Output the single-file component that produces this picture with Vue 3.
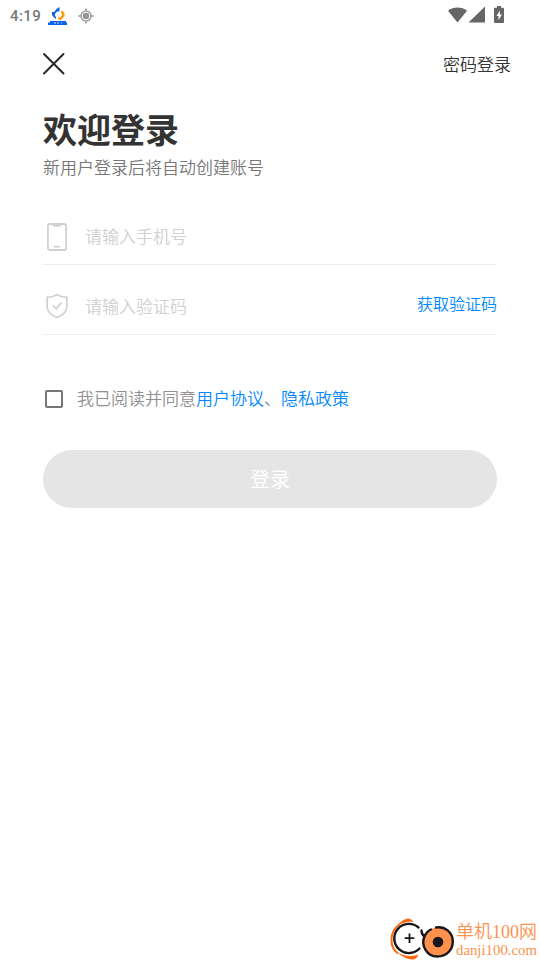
<script setup>
import { ref } from 'vue'

const phone = ref('')
const code = ref('')
const agreed = ref(false)
</script>

<template>
  <div class="screen">
    <header class="status">
      <span class="time">4:19</span>
      <svg class="app-icon" width="20" height="19" viewBox="0 0 20 19">
        <path d="M4 8V5H6L9 1.500 11.500 0V4.500H9L7 7V9.500H8V12L6 10.500Z" fill="#0d62ea" />
        <path d="M13 4H14.500L16.500 6V9L12.500 13.500 10 12V10.500H12L14 8V6.500H13Z" fill="#ff970f" />
        <path d="M2 14h16v1.500h1V18H0v-2.500h2Z" fill="#0d62ea" />
        <path d="M6 16h2M9 16h2M13 16h1" stroke="#cfe0ff" />
      </svg>
      <svg class="locate" width="16" height="16" viewBox="0 0 16 16" fill="none" stroke="#a8a8a8">
        <circle cx="8" cy="8" r="5" stroke-width="1.700" />
        <circle cx="8" cy="8" r="3.200" fill="#969696" stroke="none" />
        <path d="M8 .5v3M8 12.500v3M.5 8h3M12.500 8h3" stroke-width="1.800" />
      </svg>
      <span class="spacer"></span>
      <svg width="58" height="19" viewBox="0 0 58 19" fill="#666">
        <path d="M0 4.700C5.500.4 13.500.4 19 4.700L9.500 16.500Z" />
        <path d="M37 .5v16H20.500Z" />
        <path d="M49 0h4v1.700h2q1 0 1 1V16q0 1-1 1h-8q-1 0-1-1V2.700q0-1 1-1h2Z" />
        <path d="M51.800 4.500 48.500 10h2v4.300l3.400-5.800h-2.100Z" fill="#fff" />
      </svg>
    </header>

    <nav class="nav">
      <button class="close" aria-label="关闭">
        <svg width="24" height="24" viewBox="0 0 24 24">
          <path d="M2 2 21.500 21.500M21.500 2 2 21.500" stroke="#282828" stroke-width="2" stroke-linecap="round" />
        </svg>
      </button>
      <a class="password-login">密码登录</a>
    </nav>

    <main class="content">
      <h1>欢迎登录</h1>
      <p class="subtitle">新用户登录后将自动创建账号</p>

      <form @submit.prevent>
        <label class="field phone">
          <svg class="field-icon" width="22" height="28" viewBox="0 0 22 28" fill="none" stroke="#d0d0d0">
            <rect x="1.900" y="1" width="18.200" height="26" rx="1.800" stroke-width="1.800" />
            <path d="M6 1h10l-1 2q-.4.700-1.300.7H8.300Q7.400 3.700 7 3Z" fill="#d0d0d0" stroke="none" />
            <path d="M8 23.800h5.500" stroke-width="1.400" stroke-linecap="round" />
          </svg>
          <input v-model="phone" type="tel" placeholder="请输入手机号" />
        </label>
        <label class="field">
          <svg class="field-icon" width="22" height="26" viewBox="0 0 22 26" fill="none" stroke="#d0d0d0" stroke-width="1.700" stroke-linejoin="round">
            <path d="M11 1.500Q7 4.500 1.200 4.200V13.500C1.200 19 5.500 22.500 11 24.500 16.500 22.500 20.800 19 20.800 13.500V4.200Q15 4.500 11 1.500Z" />
            <path d="m7.200 12.500 3.200 3.300 4.700-6" stroke-linecap="round" />
          </svg>
          <input v-model="code" type="text" placeholder="请输入验证码" />
          <a class="get-code">获取验证码</a>
        </label>

        <label class="agreement">
          <input v-model="agreed" type="checkbox" />
          <span>我已阅读并同意<a>用户协议</a>、<a>隐私政策</a></span>
        </label>

        <button class="submit">登录</button>
      </form>
    </main>

    <footer class="brand">
      <svg width="64" height="42" viewBox="0 0 64 42" fill="none">
        <path d="M8 7.500Q12 1 18 .5 22.500 1 23 4Q16 2.800 8 7.500Z" fill="#ff6b0a" />
        <path d="M10 6C-1 13-1 29 8 35.500" stroke="#ff6b0a" stroke-width="2" />
        <path d="M7 34Q17 40.500 28 36.500 27.500 41.500 22 41.500 13 40.500 7 34Z" fill="#ff6b0a" />
        <path d="M28.500 9.500A14.600 14.600 0 1 0 29.500 30.500" stroke="#19171b" stroke-width="2.400" stroke-linecap="round" />
        <path d="M19.500 15.500v9.500M14.700 20.200h9.600" stroke="#19171b" stroke-width="1.800" />
        <circle cx="48" cy="24" r="14.500" fill="#ff914d" />
        <path d="M31.500 12.500q0 4 3 6c-4 9 2.500 20 12.500 20 10 0 15.800-7 15.800-15C62.800 14 54.500 8 46 9.500M41 11.500q-4.500 2-6.500 7" stroke="#19171b" stroke-width="2.400" stroke-linecap="round" />
        <circle cx="48" cy="24" r="5.300" fill="#19171b" />
      </svg>
      <div class="brand-text">
        <span class="brand-name">单机100网</span>
        <span class="brand-url">danji100.com</span>
      </div>
    </footer>
  </div>
</template>

<style>
body {
  margin: 0;
  background: #fff;
}
</style>

<style scoped>
.screen {
  box-sizing: border-box;
  display: flex;
  flex-direction: column;
  height: 960px;
  overflow: hidden;
  background: #fff;
  font-family: "Noto Sans CJK SC", sans-serif;
  font-weight: 350;
  color: #333;
}
svg {
  display: block;
  flex: none;
}
button {
  border: 0;
  font: inherit;
}
.status {
  display: flex;
  align-items: center;
  height: 32px;
  padding: 0 34px 2px 10px;
  box-sizing: border-box;
}
.time {
  width: 38px;
  margin-top: 2px;
  font: 500 15px/20px Roboto, sans-serif;
  letter-spacing: .4px;
  color: #777;
}
.app-icon {
  margin-top: 3px;
}
.locate {
  margin: 1px 0 0 10px;
}
.spacer {
  flex: 1;
}
.nav {
  display: flex;
  align-items: center;
  justify-content: space-between;
  height: 64px;
  padding: 0 29px 0 42px;
}
.close {
  padding: 0;
  background: none;
}
.password-login {
  padding-bottom: 2px;
  font-size: 17px;
  line-height: 25px;
}
.content {
  flex: 1;
  padding: 8px 43px 0;
}
h1 {
  margin: 0;
  font-size: 34px;
  font-weight: 700;
  line-height: 50px;
}
.subtitle {
  margin: 0 0 36px;
  font-size: 17px;
  line-height: 25px;
  color: #777;
}
.field {
  display: flex;
  align-items: center;
  box-sizing: border-box;
  height: 70px;
  border-bottom: 1px solid #ebebeb;
  padding-top: 12px;
}
.phone {
  height: 50px;
  padding: 0 0 5px;
}
.field-icon {
  margin: 0 17px 0 3px;
}
.field input {
  flex: 1;
  min-width: 0;
  padding: 0;
  border: 0;
  outline: 0;
  background: none;
  font: 350 17px/25px "Noto Sans CJK SC", sans-serif;
}
.phone input {
  margin-bottom: 3px;
}
.field input::placeholder {
  color: #d0d0d0;
  opacity: 1;
}
.get-code {
  margin-bottom: 5px;
  font-size: 16px;
  line-height: 24px;
  color: #0088ff;
}
.agreement {
  display: flex;
  align-items: center;
  height: 26px;
  margin-top: 50px;
  font-size: 17px;
  line-height: 25px;
  color: #909090;
}
.agreement span {
  padding-bottom: 2px;
}
.agreement input {
  appearance: none;
  box-sizing: border-box;
  width: 18px;
  height: 18px;
  margin: 1px 14px 0 2px;
  border: 2px solid #777;
  border-radius: 2px;
}
.agreement a {
  color: #0088ff;
}
.submit {
  display: block;
  width: 100%;
  height: 58px;
  margin-top: 39px;
  padding: 0 0 2px;
  border-radius: 29px;
  background: #e5e5e5;
  font-size: 20px;
  font-weight: 400;
  color: #fff;
}
.brand {
  display: flex;
  align-items: center;
  align-self: flex-end;
  height: 42px;
  padding-right: 3px;
  color: #ff914d;
}
.brand-text {
  display: flex;
  flex-direction: column;
  padding-left: 2px;
  white-space: nowrap;
}
.brand-name {
  font: 350 18px/22px "Liberation Serif", "Noto Sans CJK SC", serif;
}
.brand-url {
  font: 14.800px/15px "Liberation Serif", serif;
}
</style>
